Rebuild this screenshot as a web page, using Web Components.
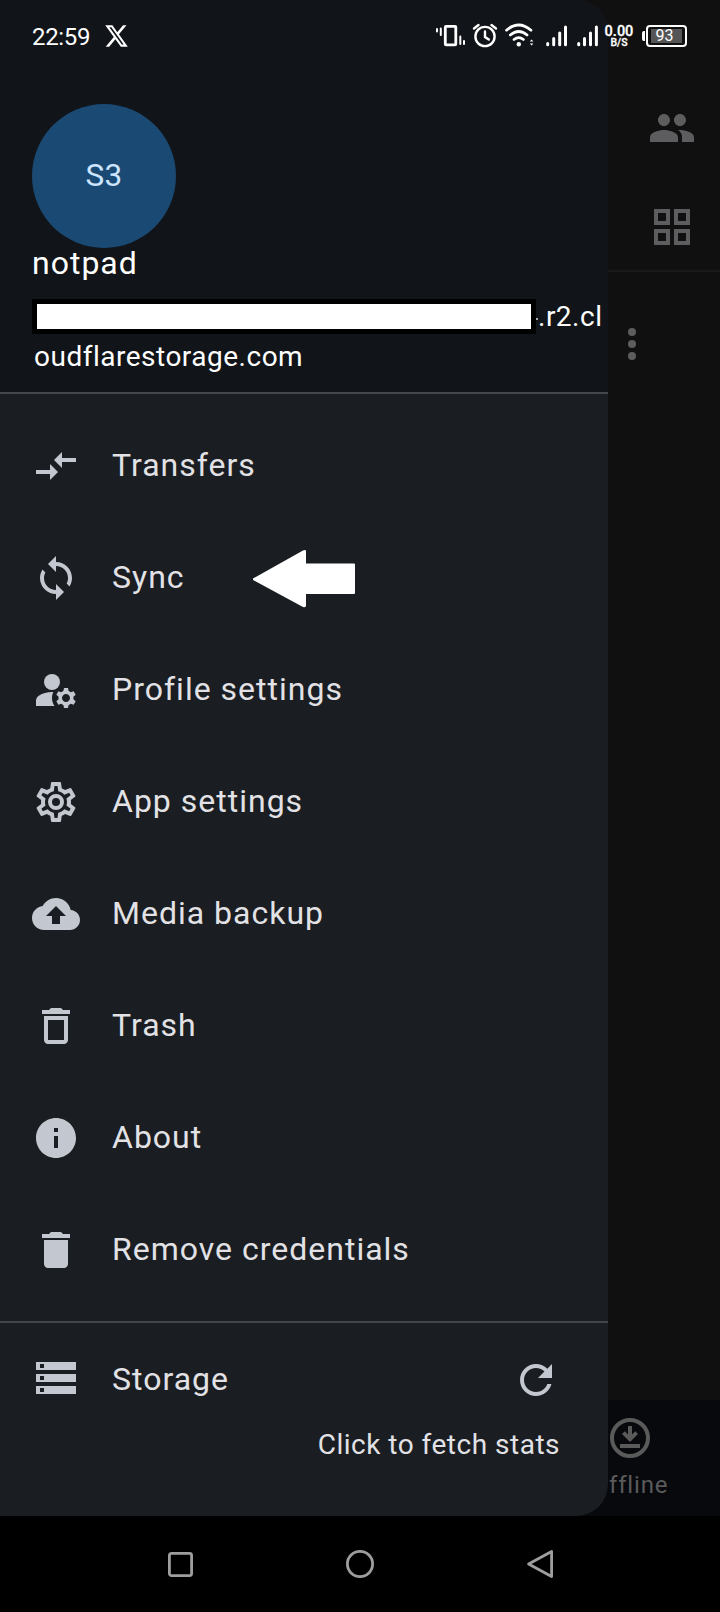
<!DOCTYPE html>
<html lang="en">
<head>
<meta charset="utf-8">
<title>Storage drawer</title>
<style>
html,body{margin:0;background:#000}
body{width:720px;height:1612px;overflow:hidden;font-family:Roboto,"Noto Sans",sans-serif}
</style>
</head>
<body>
<phone-screen></phone-screen>
<script>
const define=(name,html)=>customElements.define(name,class extends HTMLElement{
  constructor(){super();this.attachShadow({mode:'open'}).innerHTML=html;}
});

const PATHS={
  transfers:'<path d="M9.01 14H2v2h7.01v3L13 15l-3.99-4v3zm5.98-1v-3H22V8h-7.01V5L11 9l3.99 4z"/>',
  sync:'<path d="M12 4V1L8 5l4 4V6c3.31 0 6 2.69 6 6 0 1.01-.25 1.97-.7 2.8l1.46 1.46C19.54 15.03 20 13.57 20 12c0-4.42-3.58-8-8-8zm0 14c-3.31 0-6-2.69-6-6 0-1.01.25-1.97.7-2.8L5.24 7.74C4.46 8.97 4 10.43 4 12c0 4.42 3.58 8 8 8v3l4-4-4-4v3z"/>',
  profile:'<circle cx="10" cy="8" r="4"/><path d="M10.67 13.02C10.45 13.01 10.23 13 10 13c-2.42 0-4.68.67-6.61 1.82C2.51 15.34 2 16.32 2 17.35V20h9.26C10.47 18.87 10 17.49 10 16c0-1.07.25-2.07.67-2.98zM20.75 16c0-.22-.03-.42-.06-.63l1.14-1.01-1-1.73-1.45.49c-.32-.27-.68-.48-1.08-.63L18 11h-2l-.3 1.49c-.4.15-.76.36-1.08.63l-1.45-.49-1 1.73 1.14 1.01c-.03.21-.06.41-.06.63s.03.42.06.63l-1.14 1.01 1 1.73 1.45-.49c.32.27.68.48 1.08.63L16 21h2l.3-1.49c.4-.15.76-.36 1.08-.63l1.45.49 1-1.73-1.14-1.01c.03-.21.06-.41.06-.63zM17 18c-1.1 0-2-.9-2-2s.9-2 2-2 2 .9 2 2-.9 2-2 2z"/>',
  gear:'<path d="M12,8A4,4 0 0,1 16,12A4,4 0 0,1 12,16A4,4 0 0,1 8,12A4,4 0 0,1 12,8M12,10A2,2 0 0,0 10,12A2,2 0 0,0 12,14A2,2 0 0,0 14,12A2,2 0 0,0 12,10M10,22C9.75,22 9.54,21.82 9.5,21.58L9.13,18.93C8.5,18.68 7.96,18.34 7.44,17.94L4.95,18.95C4.73,19.03 4.46,18.95 4.34,18.73L2.34,15.27C2.21,15.05 2.27,14.78 2.46,14.63L4.57,12.97L4.5,12L4.57,11L2.46,9.37C2.27,9.22 2.21,8.95 2.34,8.73L4.34,5.27C4.46,5.05 4.73,4.96 4.95,5.05L7.44,6.05C7.96,5.66 8.5,5.32 9.13,5.07L9.5,2.42C9.54,2.18 9.75,2 10,2H14C14.25,2 14.46,2.18 14.5,2.42L14.87,5.07C15.5,5.32 16.04,5.66 16.56,6.05L19.05,5.05C19.27,4.96 19.54,5.05 19.66,5.27L21.66,8.73C21.79,8.95 21.73,9.22 21.54,9.37L19.43,11L19.5,12L19.43,13L21.54,14.63C21.73,14.78 21.79,15.05 21.66,15.27L19.66,18.73C19.54,18.95 19.27,19.04 19.05,18.95L16.56,17.95C16.04,18.34 15.5,18.68 14.87,18.93L14.5,21.58C14.46,21.82 14.25,22 14,22H10M11.25,4L10.88,6.61C9.68,6.86 8.62,7.5 7.85,8.39L5.44,7.35L4.69,8.65L6.8,10.2C6.4,11.37 6.4,12.64 6.8,13.8L4.68,15.36L5.43,16.66L7.86,15.62C8.63,16.5 9.68,17.14 10.87,17.38L11.24,20H12.76L13.13,17.39C14.32,17.14 15.37,16.5 16.14,15.62L18.57,16.66L19.32,15.36L17.2,13.81C17.6,12.64 17.6,11.37 17.2,10.2L19.31,8.65L18.56,7.35L16.15,8.39C15.38,7.5 14.32,6.86 13.12,6.62L12.75,4H11.25Z"/>',
  backup:'<path d="M19.35 10.04C18.67 6.59 15.64 4 12 4 9.11 4 6.6 5.64 5.35 8.04 2.34 8.36 0 10.91 0 14c0 3.31 2.69 6 6 6h13c2.76 0 5-2.24 5-5 0-2.64-2.05-4.78-4.65-4.96zM14 13v4h-4v-4H7l5-5 5 5h-3z"/>',
  trash:'<path d="M6 19c0 1.1.9 2 2 2h8c1.1 0 2-.9 2-2V7H6v12zM8 9h8v10H8V9zm7.5-5l-1-1h-5l-1 1H5v2h14V4z"/>',
  info:'<path d="M12 2C6.48 2 2 6.48 2 12s4.48 10 10 10 10-4.48 10-10S17.52 2 12 2zm1 15h-2v-6h2v6zm0-8h-2V7h2v2z"/>',
  remove:'<path d="M6 19c0 1.1.9 2 2 2h8c1.1 0 2-.9 2-2V7H6v12zM15.500 4l-1-1h-5l-1 1H5v2h14V4z"/>',
  storage:'<path d="M2 20h20v-4H2v4zm2-3h2v2H4v-2zM2 4v4h20V4H2zm4 3H4V5h2v2zm-4 7h20v-4H2v4zm2-3h2v2H4v-2z"/>',
  refresh:'<path d="M17.65 6.35C16.2 4.9 14.21 4 12 4c-4.42 0-7.99 3.58-7.99 8s3.57 8 7.99 8c3.73 0 6.84-2.55 7.73-6h-2.08c-.82 2.33-3.04 4-5.65 4-3.31 0-6-2.69-6-6s2.69-6 6-6c1.660 0 3.140.69 4.220 1.780L13 11h7V4l-2.350 2.350z"/>',
  people:'<path d="M16 11c1.66 0 2.99-1.34 2.99-3S17.66 5 16 5c-1.66 0-3 1.34-3 3s1.34 3 3 3zm-8 0c1.66 0 2.99-1.34 2.99-3S9.66 5 8 5C6.34 5 5 6.34 5 8s1.34 3 3 3zm0 2c-2.33 0-7 1.17-7 3.5V19h14v-2.5c0-2.33-4.67-3.5-7-3.5zm8 0c-.29 0-.62.02-.97.05 1.16.84 1.97 1.97 1.97 3.45V19h6v-2.5c0-2.33-4.67-3.5-7-3.5z"/>',
  grid:'<path d="M3 3v8h8V3H3zm6 6H5V5h4v4zm-6 4v8h8v-8H3zm6 6H5v-4h4v4zm4-16v8h8V3h-8zm6 6h-4V5h4v4zm-6 4v8h8v-8h-8zm6 6h-4v-4h4v4z"/>',
  more:'<circle cx="12" cy="6" r="2"/><circle cx="12" cy="12" r="2"/><circle cx="12" cy="18" r="2"/>',
  offline:'<circle cx="12" cy="12" r="9" fill="none" stroke="currentColor" stroke-width="2"/><path d="M11 6h2v4.200l1.600-1.600L16 10l-4 4-4-4 1.400-1.400L11 10.200zM7 15h10v2H7z"/>'
};
customElements.define('app-icon',class extends HTMLElement{
  connectedCallback(){
    if(this.shadowRoot)return;
    this.attachShadow({mode:'open'}).innerHTML=`<style>:host{display:block;width:48px;height:48px;flex:none}svg{display:block;fill:currentColor}</style>
    <svg width="48" height="48" viewBox="0 0 24 24">${PATHS[this.getAttribute('name')]}</svg>`;
  }
});

define('status-bar',`<style>
:host{display:flex;height:72px;align-items:center;padding:0 33px 0 32px;box-sizing:border-box;color:#fff}
svg{display:block;flex:none}
.time{font-size:24px;line-height:28px;letter-spacing:-.35px;padding-top:2px;width:73px}
.right{display:flex;align-items:center;margin-left:auto}
.net{display:flex;flex-direction:column;align-items:center;width:30px;margin:1px 8px 0 1px}
.net b{font-weight:500;font-size:14.500px;line-height:13px}
.net i{font-style:normal;font-weight:500;font-size:10.500px;line-height:10px}
.net b,.net i{-webkit-text-stroke:.3px #fff}
.bat{display:flex;align-items:center}
.cap{width:3px;height:10px;background:#fff;border-radius:2px 0 0 2px;margin-right:1px}
.cell{display:grid;place-items:center;box-sizing:border-box;width:41px;height:22px;border:2px solid #fff;border-radius:4px}
.fill{display:grid;place-items:center;width:31px;height:14px;background:#555558;font-size:16px;line-height:14px}
.fill span{margin-left:-4px}
</style>
<span class="time">22:59</span>
<svg width="23" height="22" viewBox="1 2 22 20" preserveAspectRatio="none" fill="#fff"><path d="M18.244 2.25h3.308l-7.227 8.26 8.502 11.24H16.17l-5.214-6.817L4.99 21.75H1.68l7.73-8.835L1.254 2.25H8.08l4.713 6.231zm-1.161 17.52h1.833L7.084 4.126H5.117z"/></svg>
<div class="right">
<svg width="169" height="28" viewBox="434 22 169 28" fill="none" stroke="#fff" stroke-width="2.400" stroke-linecap="round">
  <rect x="445.300" y="26.300" width="10.500" height="18.500" rx=".8" stroke-width="2.800"/>
  <path d="M437 29v2.500M440.800 28.500v6.500M460.300 36.500v7.500M464 41v3" stroke-width="2"/>
  <circle cx="485" cy="36.500" r="9.600"/><path d="M485 31.500v5.500l3.800 2.600M474 28.500l4.500-3.500M496 28.500l-4.500-3.500"/>
  <path d="M506.500 30.200Q518.700 19.800 531 30.200M510.300 35Q518.700 28 527.100 35M514 39.500Q518.700 35.800 523.400 39.500" stroke-width="2.700"/>
  <circle cx="518.800" cy="44.200" r="2.200" fill="#fff" stroke="none"/>
  <path d="M529.800 41.500l1.800-2 1.800 2zM529.800 43.500l1.800 2 1.800-2z" fill="#fff" stroke="none"/>
  <path d="M547.700 43.500v1.300M553.700 38.500v6.300M559.700 33v11.800M565.500 27v17.800M578.700 43.500v1.300M584.500 38.500v6.300M590.500 33v11.800M596.400 27v17.800" stroke-width="3"/>
</svg>
<div class="net"><b>0.00</b><i>B/S</i></div>
<div class="bat"><div class="cap"></div><div class="cell"><div class="fill"><span>93</span></div></div></div>
</div>`);

define('drawer-header',`<style>
:host{display:block;height:394px;box-sizing:border-box;padding:104px 0 0 32px;background:#111418;border-bottom:2px solid #43474b;color:#fff}
.avatar{width:144px;height:144px;border-radius:50%;background:#1a4a74;color:#cde5ff;display:grid;place-items:center;font-size:31.500px;line-height:36px;letter-spacing:.2px}
.name{font-size:32px;line-height:30px;letter-spacing:1px;height:30px;white-space:nowrap}
.url{margin-top:18px;font-size:28px;letter-spacing:.5px;line-height:40px;white-space:nowrap}
.line{display:flex;height:40px;align-items:center}
.line span{padding-top:2px}
.mask{width:504px;height:35px;box-sizing:border-box;border:5px solid #000;background:#fff;flex:none}
.speck{width:2px;height:2px;background:#aaa;flex:none;margin-top:6px}
.second{padding-left:2px}
</style>
<div class="avatar">S3</div>
<div class="name">notpad</div>
<div class="url"><div class="line"><div class="mask"></div><div class="speck"></div><span>.r2.cl</span></div><div class="line second"><span>oudflarestorage.com</span></div></div>`);

customElements.define('drawer-item',class extends HTMLElement{
  connectedCallback(){
    if(this.shadowRoot)return;
    this.attachShadow({mode:'open'}).innerHTML=`<style>
    :host{display:flex;height:112px;align-items:center;padding-left:32px;color:#c3c7cf}
    .label{margin-left:32px;color:#e2e2e6;font-size:32px;line-height:38px;letter-spacing:1px;padding-bottom:var(--label-lift,2px);padding-top:var(--label-drop,0px);white-space:nowrap}
    ::slotted(*){flex:none}
    </style><app-icon name="${this.getAttribute('icon')}"></app-icon><span class="label">${this.getAttribute('label')}</span><slot></slot>`;
  }
});

define('storage-panel',`<style>
:host{display:block;border-top:2px solid #43474b;height:193px}
drawer-item{height:110px;--label-lift:0px;--label-drop:2px}
.refresh{margin:4px 48px 0 auto}
p{margin:-6px 48px 0 0;text-align:right;color:#e2e2e6;font-size:28px;line-height:36px;letter-spacing:.5px}
</style>
<drawer-item icon="storage" label="Storage"><app-icon class="refresh" name="refresh"></app-icon></drawer-item>
<p>Click to fetch stats</p>`);

define('nav-drawer',`<style>
:host{display:flex;flex-direction:column;width:608px;height:1516px;background:#1a1d21;border-radius:0 32px 32px 0;overflow:hidden}
nav{padding:16px 0 15px}
.arrow{display:block;margin:2px 0 0 68px}
</style>
<drawer-header></drawer-header>
<nav>
<drawer-item icon="transfers" label="Transfers"></drawer-item>
<drawer-item icon="sync" label="Sync"><svg class="arrow" width="102" height="58" viewBox="0 0 102 58"><path fill="#fff" d="M0 28.500L50 .5Q53 -.5 53 1V13.500H101Q102 13.500 102 14.500V43Q102 44 101 44H53V56Q53 57.500 50 57L0 30Z"/></svg></drawer-item>
<drawer-item icon="profile" label="Profile settings"></drawer-item>
<drawer-item icon="gear" label="App settings"></drawer-item>
<drawer-item icon="backup" label="Media backup"></drawer-item>
<drawer-item icon="trash" label="Trash"></drawer-item>
<drawer-item icon="info" label="About"></drawer-item>
<drawer-item icon="remove" label="Remove credentials"></drawer-item>
</nav>
<storage-panel></storage-panel>`);

define('dimmed-page',`<style>
:host{display:flex;flex-direction:column;height:1516px;background:#101010;color:#5d5d5f}
.bar{height:272px;box-sizing:border-box;border-bottom:2px solid #191919;padding:104px 24px 0 0;display:flex;flex-direction:column;align-items:flex-end;gap:51px}
.more{margin:48px 64px 0 auto}
.tabs{margin-top:auto;height:116px;background:#07090c;display:flex;justify-content:flex-end;color:#5a5a5b}
.tab{display:flex;flex-direction:column;align-items:center;width:180px;padding-top:14px;box-sizing:border-box}
.tab span{font-size:24px;line-height:28px;letter-spacing:.8px;margin-top:9px}
</style>
<div class="bar"><app-icon name="people"></app-icon><app-icon name="grid"></app-icon></div>
<app-icon class="more" name="more"></app-icon>
<div class="tabs"><div class="tab"><app-icon name="offline"></app-icon><span>Offline</span></div></div>`);

define('system-nav',`<style>
:host{display:grid;grid-template-columns:repeat(3,180px);justify-content:center;justify-items:center;align-items:center;height:96px;background:#000}
svg{fill:none;stroke:#9e9e9e;stroke-width:2.800;stroke-linejoin:round}
</style>
<svg width="30" height="30" viewBox="0 0 30 30"><rect x="4.400" y="4.400" width="22.200" height="22.200" rx="2"/></svg>
<svg width="30" height="30" viewBox="0 0 30 30"><circle cx="15" cy="15" r="12.600"/></svg>
<svg width="30" height="30" viewBox="0 0 30 30"><path d="M3.600 15L26.600 2.500V27.500Z"/></svg>`);

define('phone-screen',`<style>
:host{display:block;width:720px;height:1612px;background:#000}
main{display:grid;grid-template:1516px/720px}
main>*{grid-area:1/1}
</style>
<main><dimmed-page></dimmed-page><nav-drawer></nav-drawer><status-bar></status-bar></main>
<system-nav></system-nav>`);
</script>
</body>
</html>
